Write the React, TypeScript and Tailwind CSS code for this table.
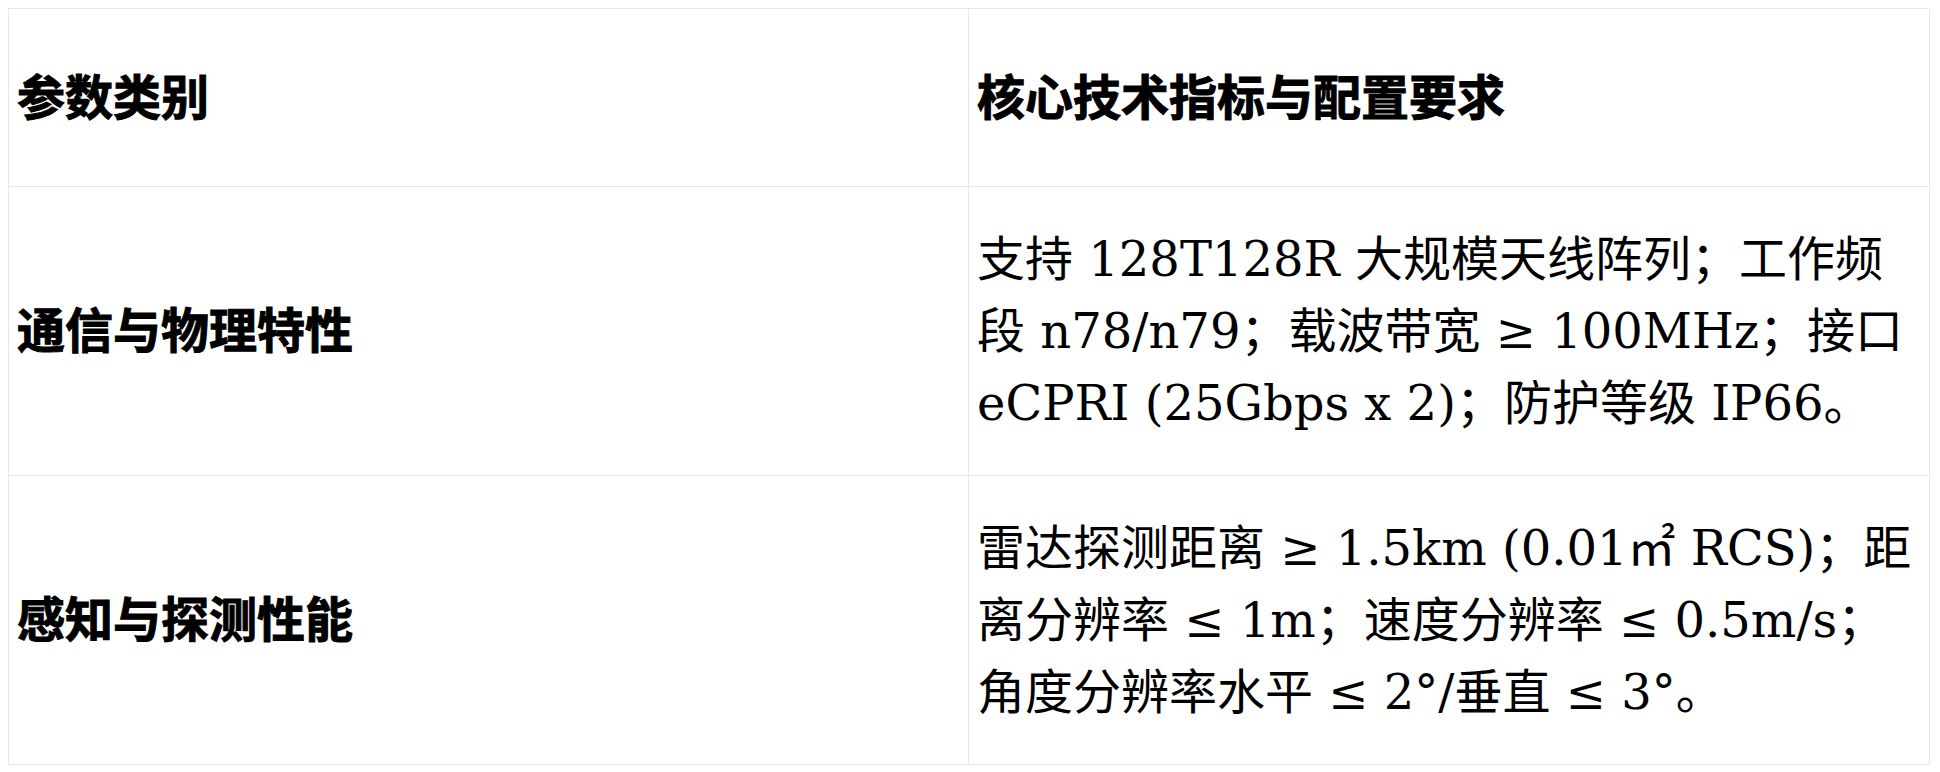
const rows = [
  {
    label: "通信与物理特性",
    value: "支持 128T128R 大规模天线阵列；工作频段 n78/n79；载波带宽 ≥ 100MHz；接口 eCPRI (25Gbps x 2)；防护等级 IP66。",
  },
  {
    label: "感知与探测性能",
    value: "雷达探测距离 ≥ 1.5km (0.01㎡ RCS)；距离分辨率 ≤ 1m；速度分辨率 ≤ 0.5m/s；角度分辨率水平 ≤ 2°/垂直 ≤ 3°。",
  },
];

export default function App() {
  return (
    <div className="min-h-screen bg-white p-2 text-black font-['DejaVu_Serif','Noto_Sans_CJK_SC',serif] text-[48px]">
      <table className="table-fixed border-collapse w-[1921px]">
        <colgroup>
          <col className="w-[960px]" />
          <col className="w-[961px]" />
        </colgroup>
        <thead>
          <tr className="h-[178px]">
            <th className="border border-[#e5e7eb] px-2 text-left align-middle font-bold [-webkit-text-stroke:1px_black]">参数类别</th>
            <th className="border border-[#e5e7eb] px-2 text-left align-middle font-bold [-webkit-text-stroke:1px_black]">核心技术指标与配置要求</th>
          </tr>
        </thead>
        <tbody>
          {rows.map((r) => (
            <tr key={r.label} className="h-[289px]">
              <td className="border border-[#e5e7eb] px-2 align-middle font-bold [-webkit-text-stroke:1px_black]">{r.label}</td>
              <td className="border border-[#e5e7eb] px-2 align-middle">{r.value}</td>
            </tr>
          ))}
        </tbody>
      </table>
    </div>
  );
}
